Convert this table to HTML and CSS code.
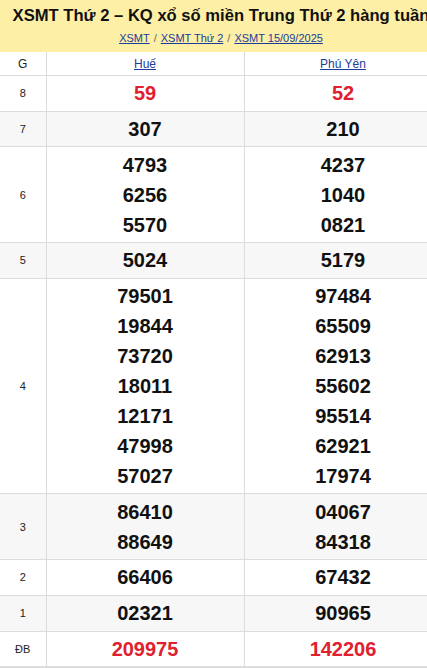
FILE: index.html
```html
<!DOCTYPE html>
<html lang="vi">
<head>
<meta charset="utf-8">
<link rel="stylesheet" href="styles.css">
</head>
<body>
<div class="page">
  <div class="head">
    <h1 class="title">XSMT Thứ 2 – KQ xổ số miền Trung Thứ 2 hàng tuần</h1>
    <div class="crumbs">
      <a href="#">XSMT</a><span class="sep">/</span><a href="#">XSMT Thứ 2</a><span class="sep">/</span><a href="#">XSMT 15/09/2025</a>
    </div>
  </div>
  <table class="kq">
    <colgroup><col class="c-g"><col class="c-p"><col class="c-p"></colgroup>
    <thead>
      <tr><th>G</th><th><a href="#">Huế</a></th><th><a href="#">Phú Yên</a></th></tr>
    </thead>
    <tbody>
      <tr><td class="g">8</td><td class="n red">59</td><td class="n red">52</td></tr>
      <tr class="alt"><td class="g">7</td><td class="n">307</td><td class="n">210</td></tr>
      <tr><td class="g">6</td><td class="n">4793<br>6256<br>5570</td><td class="n">4237<br>1040<br>0821</td></tr>
      <tr class="alt"><td class="g">5</td><td class="n">5024</td><td class="n">5179</td></tr>
      <tr><td class="g">4</td><td class="n">79501<br>19844<br>73720<br>18011<br>12171<br>47998<br>57027</td><td class="n">97484<br>65509<br>62913<br>55602<br>95514<br>62921<br>17974</td></tr>
      <tr class="alt"><td class="g">3</td><td class="n">86410<br>88649</td><td class="n">04067<br>84318</td></tr>
      <tr><td class="g">2</td><td class="n">66406</td><td class="n">67432</td></tr>
      <tr class="alt"><td class="g">1</td><td class="n">02321</td><td class="n">90965</td></tr>
      <tr><td class="g">ĐB</td><td class="n red">209975</td><td class="n red">142206</td></tr>
    </tbody>
  </table>
  <div class="tabs">
    <span class="tab on"></span><span class="tab"></span><span class="tab"></span><span class="tab"></span><span class="tab"></span><span class="tab"></span><span class="tab"></span><span class="tab"></span><span class="tab"></span><span class="tab"></span><span class="tab"></span><span class="tab"></span><span class="tab"></span>
  </div>
</div>
</body>
</html>
```
FILE: styles.css
```css
html, body {
  margin: 0;
  padding: 0;
  background: #fff;
}
body {
  font-family: "Liberation Sans", Arial, sans-serif;
  color: #111;
}
.page {
  width: 442px;
}
.head {
  background: #fdefa6;
  height: 52px;
  box-sizing: border-box;
  padding-top: 5px;
  text-align: center;
}
.title {
  margin: 0;
  font-size: 16.6px;
  line-height: 22px;
  font-weight: bold;
  color: #111;
  white-space: nowrap;
}
.crumbs {
  margin-top: 1px;
  font-size: 11px;
  line-height: 20px;
}
.crumbs a {
  color: #1b3c9a;
  text-decoration: underline;
}
.crumbs .sep {
  color: #666;
  margin: 0 4px;
}
.kq {
  width: 442px;
  border-collapse: collapse;
  table-layout: fixed;
}
.c-g { width: 46px; }
.c-p { width: 198px; }
.kq th, .kq td {
  border: 1px solid #dcdcdc;
  text-align: center;
  vertical-align: middle;
  padding: 0;
}
.kq tr:first-child th { border-top: none; }
.kq th:first-child, .kq td:first-child { border-left: none; }
.kq th {
  height: 23px;
  font-size: 12px;
  font-weight: normal;
  color: #222;
}
.kq th a {
  color: #1b3c9a;
  text-decoration: underline;
}
.kq .g {
  font-size: 11px;
  color: #222;
}
.kq .n {
  font-size: 20px;
  font-weight: bold;
  line-height: 30px;
  padding: 2.35px 0;
  color: #111;
}
.kq .n.red {
  color: #e0202e;
}
.kq tr.alt td {
  background: #f7f7f7;
}
.tabs {
  display: flex;
  border-top: 1px solid #dcdcdc;
}
.tab {
  flex: 0 0 34px;
  height: 30px;
  border-right: 1px solid #e2e2e2;
  border-top: 3px solid transparent;
  background: #f7f7f7;
}
.tab.on {
  border-top-color: #c8161d;
  flex-basis: 32px;
}
```
